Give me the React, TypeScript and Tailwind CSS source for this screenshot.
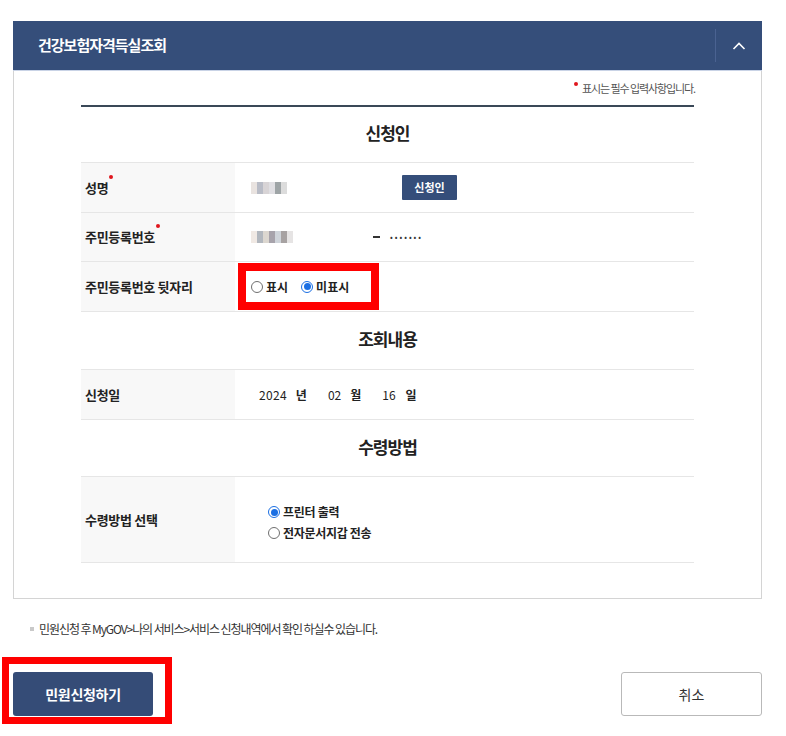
import React from "react";

function Radio({ checked }: { checked?: boolean }) {
  return checked ? (
    <span className="flex h-[12px] w-[12px] items-center justify-center rounded-full border border-[#1b6fe3] bg-white">
      <span className="h-[7px] w-[7px] rounded-full bg-[#1b6fe3]" />
    </span>
  ) : (
    <span className="h-[12px] w-[12px] rounded-full border border-[#6f6f6f] bg-white" />
  );
}

function Blur({ cells }: { cells: string[] }) {
  return (
    <div className="flex blur-[0.6px]">
      {cells.map((c, i) => (
        <span key={i} className="h-[12px] w-[6px]" style={{ backgroundColor: c }} />
      ))}
    </div>
  );
}

function Dot() {
  return <span className="absolute -right-[5px] -top-[3px] h-[4px] w-[4px] rounded-full bg-[#e0161d]" />;
}

function Row({
  label,
  required,
  h = "h-[50px]",
  children,
}: {
  label: string;
  required?: boolean;
  h?: string;
  children: React.ReactNode;
}) {
  return (
    <div className={`flex border-b border-[#e6e6e6] ${h}`}>
      <div className="flex w-[154px] shrink-0 items-center bg-[#f8f8f8] pl-[4px]">
        <span className="relative text-[13px] font-bold tracking-[-0.3px] text-[#222]">
          {label}
          {required && <Dot />}
        </span>
      </div>
      <div className="flex flex-1 items-center">{children}</div>
    </div>
  );
}

function Title({ text, h }: { text: string; h: string }) {
  return (
    <div className={`flex items-center justify-center border-b border-[#e6e6e6] pb-[3px] ${h}`}>
      <span className="text-[17px] font-bold tracking-[-1px] text-[#222]">{text}</span>
    </div>
  );
}

export default function App() {
  return (
    <div className="min-h-[736px] bg-white pt-[21px] font-['Noto_Sans_CJK_KR','Noto_Sans',sans-serif] text-[#222]">
      <div className="ml-[13px] w-[749px]">
        {/* Header */}
        <div className="flex h-[50px] items-center justify-between border-b border-[#c9d3e6] bg-[#354e7a]">
          <span className="pl-[25px] text-[15px] font-bold tracking-[-1px] text-white">건강보험자격득실조회</span>
          <div className="flex h-[33px] items-center border-l border-[#4a6291]">
            <svg width="46" height="20" viewBox="0 0 46 20">
              <path d="M17.5 13 L23 7.5 L28.5 13" fill="none" stroke="white" strokeWidth="1.6" />
            </svg>
          </div>
        </div>

        {/* Body */}
        <div className="border-x border-b border-[#d4d4d4] pb-[35px]">
          <div className="flex h-[34px] items-center justify-end pr-[66px]">
            <span className="-mt-[8px] h-[4px] w-[4px] rounded-full bg-[#e0161d]" />
            <span className="ml-[4px] text-[11px] tracking-[-0.1em] text-[#555]">표시는 필수 입력사항입니다.</span>
          </div>

          <div className="mx-[67px] border-t-[2px] border-[#3a4857]">
            <Title text="신청인" h="h-[56px]" />
            <Row label="성명" required>
              <div className="ml-[16px] w-[151px]">
                <Blur cells={["#e9e3e0", "#b9bcc6", "#d8d4d6", "#e0dfe3", "#9ea4a6", "#dcdcdc"]} />
              </div>
              <button className="h-[25px] w-[55px] rounded-[1px] bg-[#354e7a] text-[11px] font-bold text-white">
                신청인
              </button>
            </Row>
            <Row label="주민등록번호" required h="h-[49px]">
              <div className="ml-[16px] w-[122px]">
                <Blur cells={["#f0e9e4", "#b2b7be", "#dcd7d0", "#a7a3ab", "#cfd4da", "#a7a2a2", "#e6e4e4"]} />
              </div>
              <span className="h-[2px] w-[7px] bg-[#333]" />
              <span className="ml-[10px] text-[8px] tracking-[2px] text-[#333]">•••••••</span>
            </Row>
            <Row label="주민등록번호 뒷자리">
              <div className="relative ml-[3px] flex h-[47px] w-[141px] items-center gap-[3px] pl-[13px]">
                <Radio />
                <span className="text-[12px] font-bold">표시</span>
                <span className="ml-[7px]" />
                <Radio checked />
                <span className="text-[12px] font-bold">미표시</span>
                <div className="pointer-events-none absolute inset-0 border-[8px] border-[#ff0000]" />
              </div>
            </Row>
            <Title text="조회내용" h="h-[58px]" />
            <Row label="신청일">
              <div className="ml-[24px] flex items-center text-[12px]">
                <span className="tracking-[0.3px]">2024</span>
                <span className="ml-[9px] font-bold">년</span>
                <span className="ml-[21px]">02</span>
                <span className="ml-[9px] font-bold">월</span>
                <span className="ml-[21px]">16</span>
                <span className="ml-[10px] font-bold">일</span>
              </div>
            </Row>
            <Title text="수령방법" h="h-[57px]" />
            <Row label="수령방법 선택" h="h-[86px]">
              <div className="ml-[33px] flex flex-col gap-[3px] pt-[6px] text-[12px] font-bold">
                <div className="flex items-center gap-[3px]">
                  <Radio checked />
                  <span className="tracking-[-0.3px]">프린터 출력</span>
                </div>
                <div className="flex items-center gap-[3px]">
                  <Radio />
                  <span className="tracking-[-0.3px]">전자문서지갑 전송</span>
                </div>
              </div>
            </Row>
          </div>
        </div>

        {/* Note */}
        <div className="mt-[21px] flex items-center pl-[17px]">
          <span className="h-[4px] w-[4px] bg-[#c9c9c9]" />
          <span className="ml-[5px] text-[12px] tracking-[-0.09em] text-[#333]">
            민원신청 후 MyGOV&gt;나의 서비스&gt;서비스 신청내역에서 확인 하실수 있습니다.
          </span>
        </div>

        {/* Buttons */}
        <div className="mt-[34px] flex items-center justify-between">
          <div className="relative">
            <button className="h-[44px] w-[140px] rounded-[3px] bg-[#354c77] text-[14px] font-bold tracking-[-0.3px] text-white">
              민원신청하기
            </button>
            <div className="pointer-events-none absolute -left-[11px] -right-[19px] -top-[15px] -bottom-[8px] border-[7px] border-[#ff0000]" />
          </div>
          <button className="h-[44px] w-[141px] rounded-[3px] border border-[#b9b9b9] bg-white text-[14px] text-[#333]">
            취소
          </button>
        </div>
      </div>
    </div>
  );
}
